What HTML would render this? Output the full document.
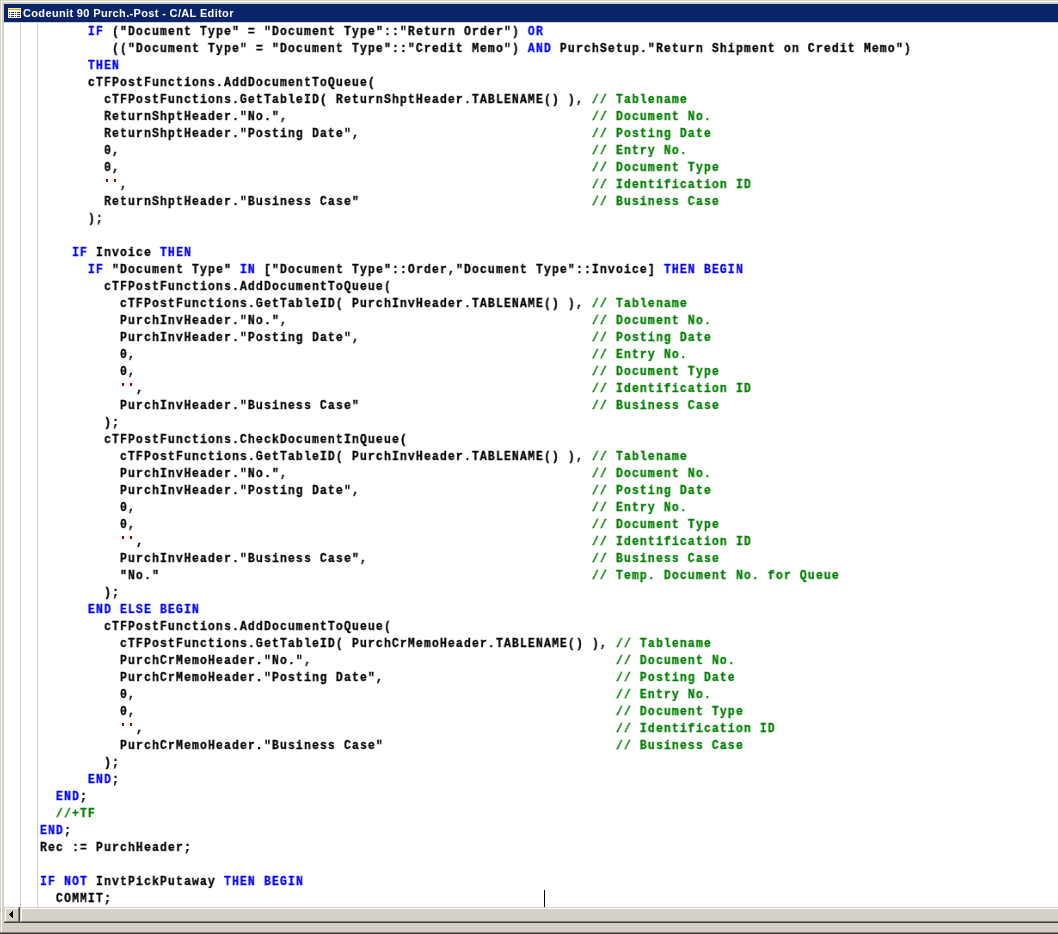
<!DOCTYPE html>
<html><head><meta charset="utf-8">
<style>
html,body{margin:0;padding:0;}
body{width:1058px;height:934px;overflow:hidden;background:#d4d0c8;position:relative;}
.abs{position:absolute;}
#frame-w{left:1px;top:1px;width:1057px;height:931px;border-left:1px solid #fff;border-top:1px solid #fff;box-sizing:border-box;}
#title{left:4px;top:4px;width:1054px;height:18px;background:#0a246a;}
#title .t{position:absolute;left:19px;top:3px;height:18px;line-height:18px;color:#fff;font:bold 11px "Liberation Sans",sans-serif;letter-spacing:0.35px;white-space:nowrap;will-change:transform;}
#editor{left:4px;top:22px;width:1054px;height:885px;background:#fff;overflow:hidden;}
#topline{left:4px;top:22px;width:1054px;height:1px;background:#d4d0c8;}
.vg{position:absolute;top:23px;width:1px;height:884px;background:#d4d0c8;}
pre{position:absolute;left:40px;top:23px;margin:0;transform-origin:0 0;transform:scaleX(0.86);will-change:transform;-webkit-text-stroke:0.3px currentColor;letter-spacing:1.3023px;font-family:"Liberation Mono",monospace;font-weight:bold;font-size:13.333px;line-height:17px;color:#000;white-space:pre;}
.k{color:#0000ff;}
.c{color:#008000;}
.s{color:transparent;-webkit-text-stroke:0;}
.q{position:absolute;width:2px;height:3px;background:#a00000;}
#cursor{left:544px;top:890px;width:1px;height:17px;background:#000;}
#sb{left:4px;top:907px;width:1054px;height:16px;background:#d4d0c8;}
.btn{position:absolute;top:0;height:16px;background:#d4d0c8;box-shadow:inset -1px -1px #404040,inset 1px 1px #d4d0c8,inset -2px -2px #808080,inset 2px 2px #fff;}
#bot1{left:0;top:932px;width:1058px;height:1px;background:#808080;}
#bot2{left:0;top:933px;width:1058px;height:1px;background:#404040;}
</style></head><body>
<div id="frame-w" class="abs"></div>
<div id="title" class="abs">
<svg class="abs" style="left:4px;top:3px" width="15" height="12" viewBox="0 0 15 12" shape-rendering="crispEdges">
<rect x="0" y="1" width="13" height="1" fill="#fff0a0"/>
<rect x="0" y="2" width="13" height="1" fill="#f8a800"/>
<rect x="0" y="3" width="13" height="8" fill="#fff"/>
<rect x="13" y="1" width="1" height="10" fill="#202040"/>
<g fill="#3a2a4a">
<rect x="1" y="5" width="1" height="1"/><rect x="3" y="5" width="3" height="1"/><rect x="7" y="5" width="1" height="1"/><rect x="9" y="5" width="3" height="1"/>
<rect x="1" y="7" width="1" height="1"/><rect x="3" y="7" width="3" height="1"/><rect x="7" y="7" width="1" height="1"/><rect x="9" y="7" width="3" height="1"/>
<rect x="1" y="9" width="1" height="1"/><rect x="3" y="9" width="3" height="1"/><rect x="7" y="9" width="1" height="1"/><rect x="9" y="9" width="3" height="1"/>
</g>
</svg>
<div class="t">Codeunit 90 Purch.-Post - C/AL Editor</div>
</div>
<div id="editor" class="abs"></div>
<div id="topline" class="abs"></div>
<div class="vg" style="left:20px"></div>
<div class="vg" style="left:37px"></div>
<pre>      <span class="k">IF</span> ("Document Type" = "Document Type"::"Return Order") <span class="k">OR</span>
         (("Document Type" = "Document Type"::"Credit Memo") <span class="k">AND</span> PurchSetup."Return Shipment on Credit Memo")
      <span class="k">THEN</span>
      cTFPostFunctions.AddDocumentToQueue(
        cTFPostFunctions.GetTableID( ReturnShptHeader.TABLENAME() ), <span class="c">// Tablename</span>
        ReturnShptHeader."No.",                                      <span class="c">// Document No.</span>
        ReturnShptHeader."Posting Date",                             <span class="c">// Posting Date</span>
        0,                                                           <span class="c">// Entry No.</span>
        0,                                                           <span class="c">// Document Type</span>
        <span class="s">''</span>,                                                          <span class="c">// Identification ID</span>
        ReturnShptHeader."Business Case"                             <span class="c">// Business Case</span>
      );

    <span class="k">IF</span> Invoice <span class="k">THEN</span>
      <span class="k">IF</span> "Document Type" <span class="k">IN</span> ["Document Type"::Order,"Document Type"::Invoice] <span class="k">THEN BEGIN</span>
        cTFPostFunctions.AddDocumentToQueue(
          cTFPostFunctions.GetTableID( PurchInvHeader.TABLENAME() ), <span class="c">// Tablename</span>
          PurchInvHeader."No.",                                      <span class="c">// Document No.</span>
          PurchInvHeader."Posting Date",                             <span class="c">// Posting Date</span>
          0,                                                         <span class="c">// Entry No.</span>
          0,                                                         <span class="c">// Document Type</span>
          <span class="s">''</span>,                                                        <span class="c">// Identification ID</span>
          PurchInvHeader."Business Case"                             <span class="c">// Business Case</span>
        );
        cTFPostFunctions.CheckDocumentInQueue(
          cTFPostFunctions.GetTableID( PurchInvHeader.TABLENAME() ), <span class="c">// Tablename</span>
          PurchInvHeader."No.",                                      <span class="c">// Document No.</span>
          PurchInvHeader."Posting Date",                             <span class="c">// Posting Date</span>
          0,                                                         <span class="c">// Entry No.</span>
          0,                                                         <span class="c">// Document Type</span>
          <span class="s">''</span>,                                                        <span class="c">// Identification ID</span>
          PurchInvHeader."Business Case",                            <span class="c">// Business Case</span>
          "No."                                                      <span class="c">// Temp. Document No. for Queue</span>
        );
      <span class="k">END ELSE BEGIN</span>
        cTFPostFunctions.AddDocumentToQueue(
          cTFPostFunctions.GetTableID( PurchCrMemoHeader.TABLENAME() ), <span class="c">// Tablename</span>
          PurchCrMemoHeader."No.",                                      <span class="c">// Document No.</span>
          PurchCrMemoHeader."Posting Date",                             <span class="c">// Posting Date</span>
          0,                                                            <span class="c">// Entry No.</span>
          0,                                                            <span class="c">// Document Type</span>
          <span class="s">''</span>,                                                           <span class="c">// Identification ID</span>
          PurchCrMemoHeader."Business Case"                             <span class="c">// Business Case</span>
        );
      <span class="k">END</span>;
  <span class="k">END</span>;
  <span class="c">//+TF</span>
<span class="k">END</span>;
Rec := PurchHeader;

<span class="k">IF NOT</span> InvtPickPutaway <span class="k">THEN BEGIN</span>
  COMMIT;</pre>
<div class="q" style="left:106px;top:179px"></div>
<div class="q" style="left:114px;top:179px"></div>
<div class="q" style="left:122px;top:383px"></div>
<div class="q" style="left:130px;top:383px"></div>
<div class="q" style="left:122px;top:536px"></div>
<div class="q" style="left:130px;top:536px"></div>
<div class="q" style="left:122px;top:723px"></div>
<div class="q" style="left:130px;top:723px"></div>
<div id="cursor" class="abs"></div>
<div id="sb" class="abs">
<div class="btn" style="left:0;width:16px">
<svg class="abs" style="left:0;top:0" width="16" height="16" shape-rendering="crispEdges"><g fill="#000"><rect x="5" y="7" width="1" height="1"/><rect x="6" y="6" width="1" height="3"/><rect x="7" y="5" width="1" height="5"/><rect x="8" y="4" width="1" height="7"/></g></svg>
</div>
<div class="btn" style="left:16px;width:1100px"></div>
</div>
<div id="bot1" class="abs"></div>
<div id="bot2" class="abs"></div>
</body></html>
